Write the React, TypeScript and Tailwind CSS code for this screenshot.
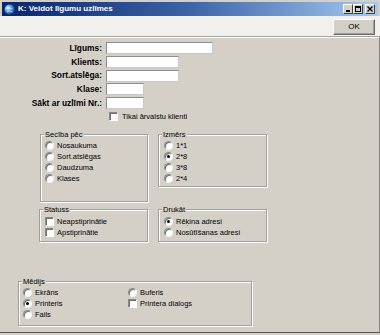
import type { ReactNode } from "react"

const font = { fontFamily: '"Liberation Sans", Arial, sans-serif' }

// Classic sunken radio button
function Radio({ checked = false }: { checked?: boolean }) {
  return (
    <span className="flex h-[9px] w-[9px] shrink-0 items-center justify-center rounded-full border border-t-[#8a8a8a] border-l-[#8a8a8a] border-b-[#f4f4f4] border-r-[#f4f4f4] bg-white shadow-[inset_1px_1px_0_#6e6e6e]">
      {checked && <span className="h-[3px] w-[3px] rounded-full bg-black" />}
    </span>
  )
}

// Classic sunken checkbox
function Check() {
  return (
    <span className="block h-[9px] w-[9px] shrink-0 border border-t-[#8a8a8a] border-l-[#8a8a8a] border-b-white border-r-white bg-white shadow-[inset_1px_1px_0_#6e6e6e]" />
  )
}

function Option({ label, kind = "radio", checked = false }: { label: string; kind?: "radio" | "check"; checked?: boolean }) {
  return (
    <div className="flex h-[11px] items-center gap-[3px] text-[7.5px] leading-none text-black">
      {kind === "radio" ? <Radio checked={checked} /> : <Check />}
      <span>{label}</span>
    </div>
  )
}

// Etched group box with caption on the border
function Group({ title, className, children }: { title: string; className: string; children: ReactNode }) {
  return (
    <div className={`relative border border-[#a3a09a] shadow-[inset_1px_1px_0_#fff,1px_1px_0_#fff] ${className}`}>
      <span className="absolute -top-[5px] left-[3px] bg-[#d4d0c8] px-[1px] text-[7.5px] leading-[9px] text-black">{title}</span>
      {children}
    </div>
  )
}

function FieldRow({ label, width }: { label: string; width: string }) {
  return (
    <div className="flex h-[12px] items-center">
      <div className="w-[103px] pr-[1px] text-right text-[8.4px] font-bold leading-none text-black">{label}</div>
      <div className={`ml-[3px] h-[12px] border border-[#8d8d8d] border-b-[#c8c8c8] border-r-[#c8c8c8] bg-white ${width}`} />
    </div>
  )
}

function TitleButton({ children, className = "" }: { children: ReactNode; className?: string }) {
  return (
    <div className={`flex h-[10px] w-[10px] items-center justify-center border border-t-white border-l-white border-b-[#404040] border-r-[#404040] bg-[#d4d0c8] ${className}`}>
      {children}
    </div>
  )
}

export default function App() {
  return (
    <div className="flex h-[335px] w-[380px] flex-col overflow-hidden bg-[#d4d0c8]" style={font}>
      {/* Title bar */}
      <div className="px-[2px] pt-[2px]">
        <div className="flex h-[14px] items-center bg-gradient-to-r from-[#0a246a] via-[#3d64a8] to-[#a6caf0] pl-[2px] pr-[3px]">
          <svg width="11" height="11" viewBox="0 0 11 11" className="shrink-0">
            <defs>
              <radialGradient id="g" cx="0.35" cy="0.35" r="0.7">
                <stop offset="0" stopColor="#e8f4ff" />
                <stop offset="0.5" stopColor="#4c9be0" />
                <stop offset="1" stopColor="#1a4f9c" />
              </radialGradient>
            </defs>
            <circle cx="5.5" cy="5.5" r="5" fill="url(#g)" />
            <path d="M2.5 4.5 Q5 3 8.5 5 M3 7.5 Q6 6 8.5 8" stroke="#ffffff" strokeWidth="0.8" fill="none" opacity="0.7" />
          </svg>
          <span className="ml-[3px] text-[8px] font-bold leading-none text-white">K: Veidot līgumu uzlīmes</span>
          <div className="ml-auto flex items-center">
            <TitleButton>
              <span className="mt-[4px] block h-[1.5px] w-[4px] bg-black" />
            </TitleButton>
            <TitleButton>
              <span className="block h-[6px] w-[6px] border border-t-2 border-black" />
            </TitleButton>
            <TitleButton className="ml-[2px]">
              <svg width="6" height="6" viewBox="0 0 6 6">
                <path d="M0.5 0.5 L5.5 5.5 M5.5 0.5 L0.5 5.5" stroke="#000" strokeWidth="1.3" />
              </svg>
            </TitleButton>
          </div>
        </div>
      </div>

      {/* Toolbar */}
      <div className="flex h-[21px] justify-end border-b border-b-[#a6a39c] bg-[#f1f0ec] pr-[5px] pt-[3px] shadow-[0_1px_0_#fff]">
        <div className="flex h-[16px] w-[42px] items-center justify-center border border-t-white border-l-white border-b-[#6a6a6a] border-r-[#6a6a6a] bg-[#d4d0c8] text-[8px] leading-none text-black shadow-[inset_-1px_-1px_0_#a0a0a0]">
          OK
        </div>
      </div>

      {/* Main area */}
      <div className="flex-1 border-b border-r border-b-[#555] border-r-[#8a8780] pt-[5px]">
        <div className="flex flex-col gap-[1.75px]">
          <FieldRow label="Līgums:" width="w-[107px]" />
          <FieldRow label="Klients:" width="w-[73px]" />
          <FieldRow label="Sort.atslēga:" width="w-[73px]" />
          <FieldRow label="Klase:" width="w-[38px]" />
          <FieldRow label="Sākt ar uzlīmi Nr.:" width="w-[38px]" />
        </div>

        <div className="ml-[109px] mt-[3px] flex h-[9px] items-center gap-[4px] text-[7.5px] leading-none text-black">
          <Check />
          <span>Tikai ārvalstu klienti</span>
        </div>

        <div className="ml-[40px] mt-[13px] flex items-start gap-[10px]">
          <Group title="Secība pēc" className="h-[68px] w-[108px] pl-[4px] pt-[5px]">
            <Option label="Nosaukuma" />
            <Option label="Sort.atslēgas" />
            <Option label="Daudzuma" />
            <Option label="Klases" />
          </Group>
          <Group title="Izmērs" className="h-[53px] w-[109px] pl-[5px] pt-[5px]">
            <Option label="1*1" />
            <Option label="2*8" checked />
            <Option label="3*8" />
            <Option label="2*4" />
          </Group>
        </div>

        <div className="ml-[39px] mt-[7px] flex items-start gap-[10px]">
          <Group title="Statuss" className="h-[33px] w-[109px] pl-[5px] pt-[6px]">
            <Option label="Neapstiprinātie" kind="check" />
            <Option label="Apstiprinātie" kind="check" />
          </Group>
          <Group title="Drukāt" className="h-[33px] w-[109px] pl-[5px] pt-[6px]">
            <Option label="Rēķina adresi" checked />
            <Option label="Nosūtīšanas adresi" />
          </Group>
        </div>

        <Group title="Mēdijs" className="ml-[18px] mt-[39px] flex h-[45px] w-[234px] pl-[4px] pt-[5px]">
          <div className="w-[105px]">
            <Option label="Ekrāns" />
            <Option label="Printeris" checked />
            <Option label="Fails" />
          </div>
          <div>
            <Option label="Buferis" />
            <Option label="Printera dialogs" kind="check" />
          </div>
        </Group>
      </div>
      <div className="h-[2px]" />
    </div>
  )
}
